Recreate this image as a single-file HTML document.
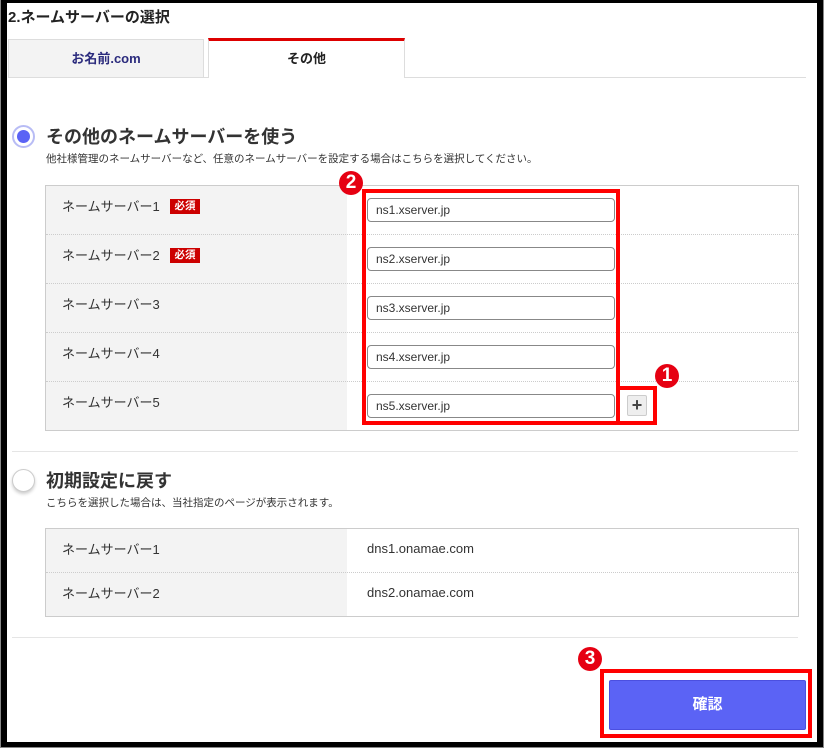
<!DOCTYPE html>
<html><head><meta charset="utf-8"><style>
*{box-sizing:border-box;margin:0;padding:0}
body{width:824px;height:749px;background:#fff;position:relative;overflow:hidden;font-family:"Liberation Sans","Noto Sans CJK JP",sans-serif;color:#333}
.a{position:absolute}
.frame{left:1px;top:0;width:822px;height:747px;border:solid #000;border-width:3px 6px 5px 6px;box-shadow:0 0 0 1px #888}
.lbl{font-size:13px;color:#333;left:62px}
.req{background:#c00;color:#fff;font-size:10.5px;font-weight:bold;width:30px;height:15px;text-align:center;line-height:15px}
.inp{left:367px;width:248px;height:24px;border:1px solid #888;border-radius:4px;font-size:12px;padding-left:8px;line-height:22px;background:#fff}
.dot{border-top:1px dotted #ccc;left:46px;width:752px}
.badge{width:24px;height:24px;border-radius:50%;background:#e60012;color:#fff;font-weight:bold;font-size:19px;text-align:center;line-height:24px}
.rbox{border:4px solid #f00}
</style></head><body>
<div class="a" style="left:8px;top:6px;font-size:15px;font-weight:bold;color:#222">2.ネームサーバーの選択</div>
<div class="a" style="left:8px;top:39px;width:196px;height:39px;background:#f3f3f3;border:1px solid #ddd;border-bottom:none;text-align:center;line-height:37px;font-size:13px;font-weight:bold;color:#2b2b7d">お名前.com</div>
<div class="a" style="left:208px;top:38px;width:197px;height:40px;background:#fff;border:1px solid #ddd;border-top:3px solid #d00;border-bottom:none;text-align:center;line-height:36px;font-size:13px;font-weight:bold;color:#222">その他</div>
<div class="a" style="left:8px;top:77px;width:200px;height:1px;background:#ddd"></div>
<div class="a" style="left:404px;top:77px;width:402px;height:1px;background:#ddd"></div>

<div class="a" style="left:12px;top:125px;width:23px;height:23px;border-radius:50%;border:2px solid #b8bcf5;background:#fff"></div>
<div class="a" style="left:17px;top:130px;width:13px;height:13px;border-radius:50%;background:#5b63f5"></div>
<div class="a" style="left:46px;top:123px;font-size:18px;font-weight:bold;color:#333">その他のネームサーバーを使う</div>
<div class="a" style="left:46px;top:151px;font-size:10.5px;color:#333">他社様管理のネームサーバーなど、任意のネームサーバーを設定する場合はこちらを選択してください。</div>

<div class="a" style="left:45px;top:185px;width:754px;height:246px;border:1px solid #ccc"></div>
<div class="a" style="left:46px;top:186px;width:301px;height:244px;background:#f3f3f3"></div>
<div class="a dot" style="top:234px"></div><div class="a dot" style="top:283px"></div><div class="a dot" style="top:332px"></div><div class="a dot" style="top:381px"></div>
<div class="a lbl" style="top:196px">ネームサーバー1</div><div class="a req" style="left:170px;top:199px">必須</div>
<div class="a lbl" style="top:245px">ネームサーバー2</div><div class="a req" style="left:170px;top:248px">必須</div>
<div class="a lbl" style="top:294px">ネームサーバー3</div>
<div class="a lbl" style="top:343px">ネームサーバー4</div>
<div class="a lbl" style="top:392px">ネームサーバー5</div>
<div class="a inp" style="top:198px">ns1.xserver.jp</div>
<div class="a inp" style="top:247px">ns2.xserver.jp</div>
<div class="a inp" style="top:296px">ns3.xserver.jp</div>
<div class="a inp" style="top:345px">ns4.xserver.jp</div>
<div class="a inp" style="top:394px">ns5.xserver.jp</div>
<div class="a" style="left:627px;top:395px;width:20px;height:21px;background:#eee;border:1px solid #ccc;border-radius:2px;text-align:center;line-height:18px;font-size:18px;font-weight:bold;color:#444">+</div>
<div class="a rbox" style="left:362px;top:189px;width:258px;height:236px"></div>
<div class="a rbox" style="left:616px;top:386px;width:41px;height:39px;border-left:none"></div>
<div class="a badge" style="left:339px;top:171px">2</div>
<div class="a badge" style="left:655px;top:364px">1</div>

<div class="a" style="left:12px;top:451px;width:786px;height:1px;background:#e5e5e5"></div>
<div class="a" style="left:12px;top:469px;width:23px;height:23px;border-radius:50%;border:1px solid #ccc;background:#fff;box-shadow:0 2px 3px rgba(0,0,0,.2)"></div>
<div class="a" style="left:46px;top:467px;font-size:18px;font-weight:bold;color:#333">初期設定に戻す</div>
<div class="a" style="left:46px;top:495px;font-size:10.5px;color:#333">こちらを選択した場合は、当社指定のページが表示されます。</div>

<div class="a" style="left:45px;top:528px;width:754px;height:89px;border:1px solid #ccc"></div>
<div class="a" style="left:46px;top:529px;width:301px;height:87px;background:#f3f3f3"></div>
<div class="a dot" style="top:572px"></div>
<div class="a lbl" style="top:539px">ネームサーバー1</div>
<div class="a lbl" style="top:583px">ネームサーバー2</div>
<div class="a" style="left:367px;top:541px;font-size:13px">dns1.onamae.com</div>
<div class="a" style="left:367px;top:585px;font-size:13px">dns2.onamae.com</div>

<div class="a" style="left:12px;top:637px;width:786px;height:1px;background:#e5e5e5"></div>
<div class="a badge" style="left:578px;top:647px">3</div>
<div class="a rbox" style="left:600px;top:669px;width:212px;height:69px"></div>
<div class="a" style="left:609px;top:680px;width:197px;height:50px;background:#5b63f5;border:1px solid #4b4fe0;border-radius:2px;color:#fff;font-weight:bold;font-size:15px;text-align:center;line-height:48px">確認</div>
<div class="a frame"></div>
</body></html>
